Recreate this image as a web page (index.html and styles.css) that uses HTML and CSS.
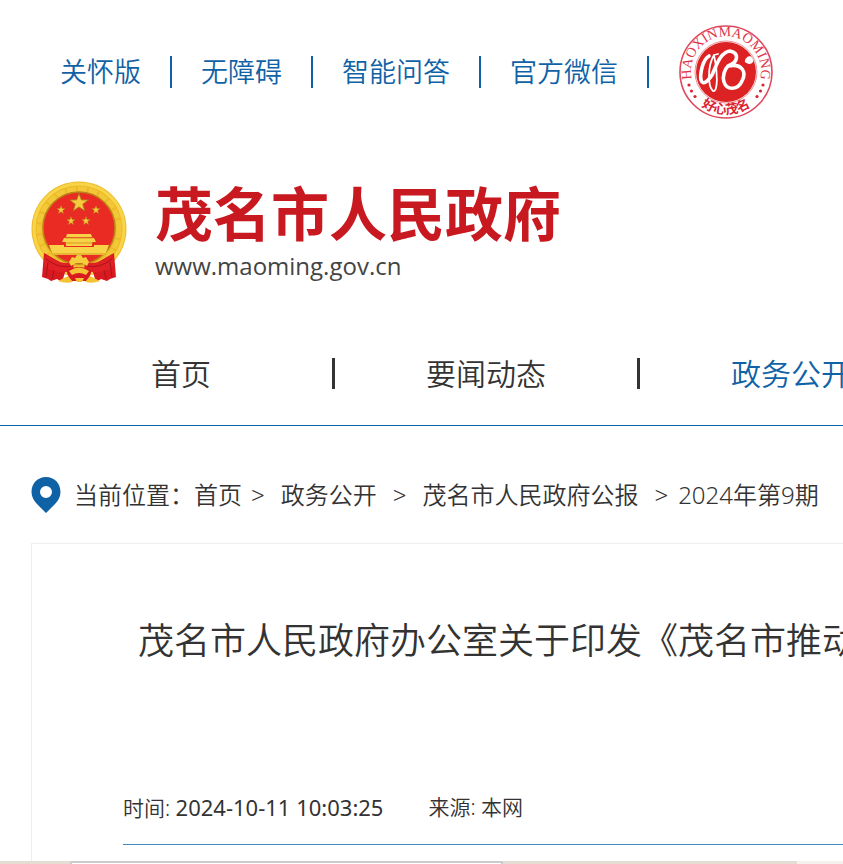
FILE: index.html
```
<!DOCTYPE html>
<html lang="zh-CN">
  <head>
    <meta charset="UTF-8" />
    <meta name="viewport" content="width=device-width, initial-scale=1.0" />
    <title>茂名市人民政府</title>
    <link rel="stylesheet" href="styles.css">
  </head>
  <body>
    <!-- Top links -->
    <div class="topbar">
      <a class="top-link" href="#">关怀版</a>
      <a class="top-link" href="#">无障碍</a>
      <a class="top-link" href="#">智能问答</a>
      <a class="top-link" href="#">官方微信</a>
      <a class="seal" href="#" aria-label="好心茂名">
        <svg viewBox="0 0 94 94" width="94" height="94">
          <defs>
            <path id="arc-top" d="M15.200 61 A35 35 0 1 1 78.800 61" />
            <path id="arc-bottom" d="M16 75.500 A42.500 42.500 0 0 0 78 75.500" />
          </defs>
          <circle cx="47" cy="47" r="46" fill="#fff" stroke="#e0475a" stroke-width="1.600" />
          <circle cx="47" cy="47" r="31" fill="#fff" stroke="#ef8f99" stroke-width="1" />
          <circle cx="47" cy="47" r="30" fill="#dc2222" />
          <text class="seal-latin"><textPath href="#arc-top" startOffset="50%" text-anchor="middle">HAOXINMAOMING</textPath></text>
          <text class="seal-cn"><textPath href="#arc-bottom" startOffset="50%" text-anchor="middle">好心茂名</textPath></text>
          <g fill="#dc2233">
            <circle cx="10" cy="60" r="1.600" /><circle cx="12.500" cy="66" r="1.600" /><circle cx="16" cy="71.500" r="1.600" />
            <circle cx="84" cy="60" r="1.600" /><circle cx="81.500" cy="66" r="1.600" /><circle cx="78" cy="71.500" r="1.600" />
          </g>
          <g fill="none" stroke="#fff" stroke-linecap="round" stroke-linejoin="round">
            <path stroke-width="3.600" d="M30 31 C23 35 21 50 22 55 C24 61 29 56 33 50 C37 42 41 27 51 26 C60 28 60 37 49 41 C63 38 68 47 63 56 C59 65 48 66 45 57 C43 51 46 44 49 41" />
            <path stroke-width="1.800" d="M35 30 C28 42 29 62 34 66 C39 68 39 46 35 30 M35 30 L39 29" />
          </g>
          <path fill="#fff" d="M66 37 C65 34 69 31 71 31 C73 32 75 35 74 37 C72 40 68 39 66 37Z" />
        </svg>
      </a>
    </div>

    <!-- Site name -->
    <header class="brand">
      <svg class="emblem" viewBox="0 0 96 104" width="96" height="104" aria-hidden="true">
        <defs>
          <path id="star" d="M0 -10 L2.400 -3.200 L9.500 -3.100 L3.800 1.200 L5.900 8.100 L0 4 L-5.900 8.100 L-3.800 1.200 L-9.500 -3.100 L-2.400 -3.200Z" />
        </defs>
        <circle cx="48" cy="49" r="47.500" fill="#edb928" />
        <circle cx="48" cy="49" r="45" fill="none" stroke="#f8d548" stroke-width="3" />
        <circle cx="48" cy="49" r="40" fill="none" stroke="#f2c738" stroke-width="5" stroke-dasharray="9 2" />
        <circle cx="48" cy="48" r="36" fill="#e92b23" stroke="#bd8016" stroke-width="1.500" />
        <g fill="#f5ca3d" stroke="#b5691e" stroke-width="1">
          <use href="#star" transform="translate(48 23)" />
          <use href="#star" transform="translate(30 30) scale(.45)" />
          <use href="#star" transform="translate(65 30) scale(.45)" />
          <use href="#star" transform="translate(40 41) scale(.45)" />
          <use href="#star" transform="translate(55 41) scale(.45)" />
        </g>
        <path fill="#f8d348" d="M36 54 H60 L61 57 H35Z M33 58 H63 L65 62 H31Z M35 62 H61 V66 H35Z M18 65 H33 V67 H63 V65 H78 L74 75 H22Z" />
        <path fill="none" stroke="#d99521" stroke-width="1" d="M34 58 H62 M34 63 H62 M21 74 H75" />
        <path fill="#d81920" d="M13 73 L36 86 L31 102 L26 99 L20 101 L17 99 L11 97Z M83 73 L60 86 L65 102 L70 99 L76 101 L79 99 L85 97Z" />
        <path fill="#e02024" d="M15 74 Q29 86 42 82 L43 90 Q26 96 13 86Z M81 74 Q67 86 54 82 L53 90 Q70 96 83 86Z" />
        <path fill="none" stroke="#a8141b" stroke-width="1" d="M17 82 L15 97 M23 90 L21 99 M79 82 L81 97 M73 90 L75 99 M15 79 Q28 89 40 86 M81 79 Q68 89 56 86" />
        <path fill="#f5cc3c" d="M38 82 L41 77 L44 78 L46 75 H50 L52 78 L55 77 L58 82 L56 86 L51 83 H45 L40 86Z" />
        <path fill="#d81920" d="M35 90 Q48 84 61 90 L57 101 L39 101Z" />
        <path fill="#f3c333" d="M38 91 Q48 84 58 91 L55 95 Q48 91 41 95Z M27 101 L37 96 L42 102 Q34 104 27 101Z M69 101 L59 96 L54 102 Q62 104 69 101Z M44 98 H53 L51 102 H46Z" />
      </svg>
      <div class="brand-text">
        <h1 class="brand-name">茂名市人民政府</h1>
        <p class="brand-url">www.maoming.gov.cn</p>
      </div>
    </header>

    <!-- Main menu -->
    <nav class="menu">
      <a class="menu-item" href="#">首页</a>
      <a class="menu-item" href="#">要闻动态</a>
      <a class="menu-item active" href="#">政务公开</a>
    </nav>

    <!-- Breadcrumb -->
    <div class="crumbs">
      <svg class="pin" viewBox="0 0 30 36" width="30" height="36" aria-hidden="true">
        <path fill="#1062a6" fill-rule="evenodd" d="M15 0 C6.500 0 0.500 6.500 0.500 15 C0.500 20 3 24 6 27 L15 36 L24 27 C27 24 29.500 20 29.500 15 C29.500 6.500 23.500 0 15 0Z M15 9 A6 6 0 1 1 15 21 A6 6 0 1 1 15 9Z" />
      </svg>
      <span>当前位置：</span>
      <a href="#">首页</a>
      <span class="arrow first">&gt;</span>
      <a href="#">政务公开</a>
      <span class="arrow">&gt;</span>
      <a href="#">茂名市人民政府公报</a>
      <span class="arrow last">&gt;</span>
      <a href="#">2024年第9期</a>
    </div>

    <!-- Article -->
    <main class="article">
      <h2 class="article-title">茂名市人民政府办公室关于印发《茂名市推动</h2>
      <div class="article-info">
        <span>时间: <time class="date">2024-10-11 10:03:25</time></span>
        <span>来源: 本网</span>
      </div>
    </main>

    <div class="bottom-strip">
      <div class="strip-box"></div>
      <div class="strip-end"></div>
    </div>
  </body>
</html>
```
FILE: styles.css
```
* {
  box-sizing: border-box;
}
body {
  display: flex;
  flex-direction: column;
  min-height: 100vh;
  margin: 0;
  overflow: hidden;
  background: #fff;
  color: #333;
  font-family: "Noto Sans", "Noto Sans CJK SC", sans-serif;
  font-weight: 350;
  white-space: nowrap;
}
a {
  color: inherit;
  text-decoration: none;
}
h1,
h2,
p {
  margin: 0;
}

/* top links */
.topbar {
  display: flex;
  align-items: center;
  padding: 25px 0 0 31px;
}
.top-link {
  padding: 0 29px;
  border-right: 2px solid #1062a6;
  color: #1062a6;
  font-size: 27px;
  line-height: 32px;
}
.seal {
  display: flex;
  margin-left: 30px;
}
.seal-latin {
  fill: #df3448;
  font-family: "Liberation Serif", serif;
  font-size: 14px;
}
.seal-cn {
  fill: #dc2233;
  font-size: 13px;
  font-weight: 700;
}

/* site name */
.brand {
  display: flex;
  gap: 28px;
  padding: 61px 0 0 31px;
}
.brand-name {
  color: #c91920;
  font-size: 58px;
  font-weight: 700;
  line-height: 68px;
}
.brand-url {
  color: #444;
  font-family: "Open Sans", sans-serif;
  font-size: 24px;
  font-weight: 400;
  line-height: 36px;
}

/* main menu */
.menu {
  display: flex;
  padding: 74px 0 36px 30px;
  border-bottom: 1px solid #1062a6;
}
.menu-item {
  flex: none;
  width: 305px;
  border-right: 3px solid #333;
  font-size: 30px;
  line-height: 31px;
  text-align: center;
}
.menu-item.active {
  color: #1062a6;
}

/* breadcrumb */
.crumbs {
  display: flex;
  align-items: center;
  padding: 50px 0 30px 31px;
  font-size: 24px;
  line-height: 37px;
}
.pin {
  margin-right: 13px;
}
.arrow {
  padding: 0 16px;
}
.arrow.first {
  padding-left: 9px;
}
.arrow.last {
  padding-right: 10px;
}

/* article */
.article {
  flex: 1;
  margin-left: 31px;
  padding: 70px 0 16px 91px;
  border-top: 1px solid #eee;
  border-left: 1px solid #eee;
}
.article-title {
  padding-left: 15px;
  font-size: 36px;
  font-weight: 350;
  line-height: 54px;
}
.article-info {
  display: flex;
  gap: 45px;
  margin-top: 124px;
  padding-bottom: 20px;
  border-bottom: 1px solid #428bc0;
  font-size: 21px;
  line-height: 31px;
}
.date {
  font-size: 22px;
  font-weight: 400;
}

/* bottom strip */
.bottom-strip {
  display: flex;
  justify-content: space-between;
  height: 3px;
  padding-left: 70px;
  background: #e5ddd3;
}
.strip-box {
  width: 56%;
  border: 2px solid #ccc;
  border-bottom: 0;
  background: #fff;
}
.strip-end {
  width: 6%;
  background: #f5f2ee;
}
```
